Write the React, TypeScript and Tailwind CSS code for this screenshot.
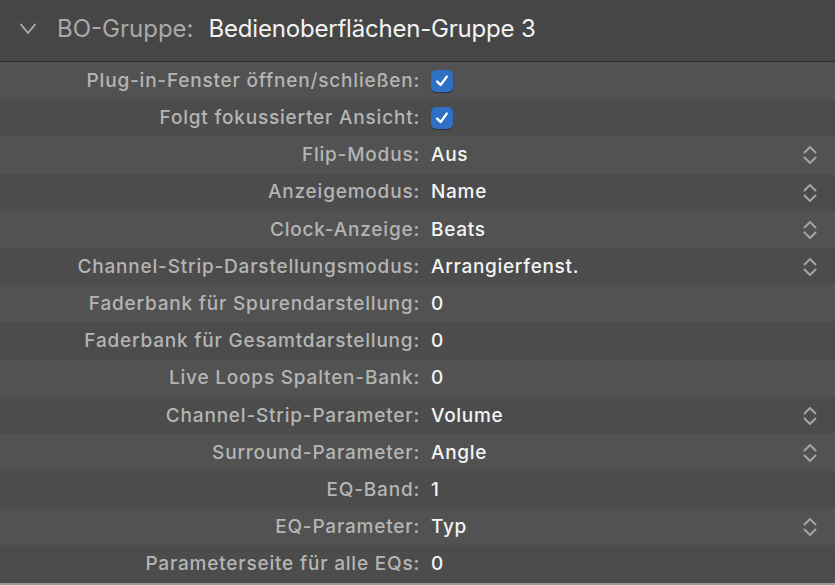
type Row = {
  label: string;
  value?: string;
  checkbox?: boolean;
  select?: boolean;
};

const rows: Row[] = [
  { label: 'Plug-in-Fenster öffnen/schließen:', checkbox: true },
  { label: 'Folgt fokussierter Ansicht:', checkbox: true },
  { label: 'Flip-Modus:', value: 'Aus', select: true },
  { label: 'Anzeigemodus:', value: 'Name', select: true },
  { label: 'Clock-Anzeige:', value: 'Beats', select: true },
  { label: 'Channel-Strip-Darstellungsmodus:', value: 'Arrangierfenst.', select: true },
  { label: 'Faderbank für Spurendarstellung:', value: '0' },
  { label: 'Faderbank für Gesamtdarstellung:', value: '0' },
  { label: 'Live Loops Spalten-Bank:', value: '0' },
  { label: 'Channel-Strip-Parameter:', value: 'Volume', select: true },
  { label: 'Surround-Parameter:', value: 'Angle', select: true },
  { label: 'EQ-Band:', value: '1' },
  { label: 'EQ-Parameter:', value: 'Typ', select: true },
  { label: 'Parameterseite für alle EQs:', value: '0' }
];

function Stepper() {
  return (
    <svg width="16" height="22" viewBox="0 0 16 22" fill="none" stroke="#a4a4a4" strokeWidth="2" strokeLinecap="round" strokeLinejoin="round">
      <path d="M2.5 8.5 L8 3 L13.5 8.5" />
      <path d="M2.5 13.5 L8 19 L13.5 13.5" />
    </svg>
  );
}

function Checkbox() {
  return (
    <div className="w-[22px] h-[22px] rounded-[5px] bg-[#2f6fc4] flex items-center justify-center shadow-[0_1px_1px_rgba(0,0,0,0.4)]">
      <svg width="16" height="16" viewBox="0 0 16 16" fill="none" stroke="white" strokeWidth="2.4" strokeLinecap="round" strokeLinejoin="round">
        <path d="M3.2 8.6 L6.6 12 L12.8 3.6" />
      </svg>
    </div>
  );
}

export default function App() {
  return (
    <div className="w-[835px] h-[585px] bg-[#4f4f4f] flex flex-col overflow-hidden" style={{ fontFamily: 'Inter, "Noto Sans", sans-serif' }}>
      <div className="h-[61px] bg-[#464646] flex items-center pl-[20px] pb-[3px] shrink-0">
        <svg width="16" height="12" viewBox="0 0 16 12" fill="none" stroke="#b0b0b0" strokeWidth="1.8" strokeLinecap="round" strokeLinejoin="round">
          <path d="M1 1.5 L8 10 L15 1.5" />
        </svg>
        <span className="ml-[21px] text-[24px] text-[#a9a9a9]">BO-Gruppe:</span>
        <span className="ml-[15px] text-[24px] text-[#f2f2f2] tracking-[-0.2px]">Bedienoberflächen-Gruppe 3</span>
      </div>
      <div className="h-[1px] bg-[#2c2c2c] shrink-0" />
      <div className="flex flex-col">
        {rows.map((row, i) => (
          <div key={row.label} className={`h-[37.2px] flex items-center pt-[1px] ${i % 2 === 0 ? 'bg-[#525252]' : 'bg-[#4c4c4c]'}`}>
            <div className="w-[420px] text-right text-[19px] text-[#b5b5b5] font-medium tracking-[0.8px] whitespace-nowrap">{row.label}</div>
            <div className="flex-1 flex items-center pl-[11px] pr-[17px]">
              {row.checkbox ? (
                <Checkbox />
              ) : (
                <span className="text-[19px] text-[#f4f4f4] font-medium tracking-[0.7px] whitespace-nowrap">{row.value}</span>
              )}
              {row.select && (
                <div className="ml-auto">
                  <Stepper />
                </div>
              )}
            </div>
          </div>
        ))}
      </div>
      <div className="h-[2px] bg-[#9a9a9a] mt-auto" />
    </div>
  );
}
